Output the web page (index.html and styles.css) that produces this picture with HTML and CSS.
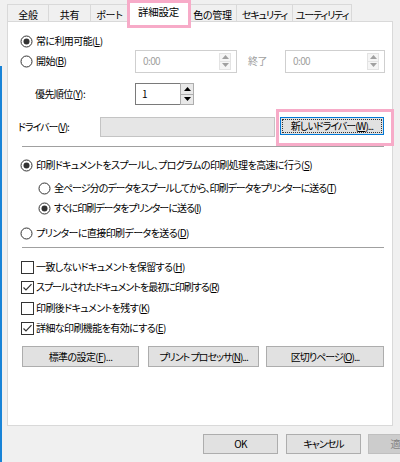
FILE: index.html
```html
<!DOCTYPE html>
<html lang="ja">
<head>
<meta charset="utf-8">
<link rel="stylesheet" href="styles.css">
</head>
<body>
<div class="win">
  <div class="tabs">
    <div class="tab w1">全般</div>
    <div class="tab w2">共有</div>
    <div class="tab w3">ポート</div>
    <div class="tab sel w4">詳細設定<span class="mark mark-tab"></span></div>
    <div class="tab w5">色の管理</div>
    <div class="tab w6 kana">セキュリティ</div>
    <div class="tab w7 kana">ユーティリティ</div>
  </div>
  <div class="panel">
    <div class="row r-a">
      <svg class="rb" width="13" height="13" viewBox="0 0 13 13"><circle cx="6.5" cy="6.5" r="5.5" fill="#fff" stroke="#333"/><circle cx="6.5" cy="6.5" r="3" fill="#333"/></svg>
      <span class="lbl">常に利用可能(<u>L</u>)</span>
    </div>
    <div class="row r-b">
      <div class="col1">
        <svg class="rb" width="13" height="13" viewBox="0 0 13 13"><circle cx="6.5" cy="6.5" r="5.5" fill="#fff" stroke="#333"/></svg>
        <span class="lbl">開始(<u>B</u>)</span>
      </div>
      <div class="spin dis sp-start">
        <span class="val">0:00</span>
        <div class="arrows">
          <span class="ar"><svg width="7" height="4" viewBox="0 0 7 4"><path d="M0 4L3.5 0L7 4Z" fill="#a0a0a0"/></svg></span>
          <span class="ar"><svg width="7" height="4" viewBox="0 0 7 4"><path d="M0 0L3.5 4L7 0Z" fill="#a0a0a0"/></svg></span>
        </div>
      </div>
      <span class="end-lbl">終了</span>
      <div class="spin dis sp-end">
        <span class="val">0:00</span>
        <div class="arrows">
          <span class="ar"><svg width="7" height="4" viewBox="0 0 7 4"><path d="M0 4L3.5 0L7 4Z" fill="#a0a0a0"/></svg></span>
          <span class="ar"><svg width="7" height="4" viewBox="0 0 7 4"><path d="M0 0L3.5 4L7 0Z" fill="#a0a0a0"/></svg></span>
        </div>
      </div>
    </div>
    <div class="row r-c">
      <div class="col1 ind"><span class="lbl">優先順位(<u>Y</u>):</span></div>
      <div class="prio">
        <span class="val">1</span>
      </div>
      <div class="prio-arrows">
        <span class="par"><svg width="7" height="4" viewBox="0 0 7 4"><path d="M0 4L3.5 0L7 4Z" fill="#000"/></svg></span>
        <span class="par"><svg width="7" height="4" viewBox="0 0 7 4"><path d="M0 0L3.5 4L7 0Z" fill="#000"/></svg></span>
      </div>
    </div>
    <div class="row r-d">
      <div class="drv-lbl kana">ドライバー(<u>V</u>):</div>
      <div class="drv-field"></div>
      <div class="btn newdrv"><span class="focus kana">新しいドライバー(<u>W</u>)...</span><span class="mark mark-btn"></span></div>
    </div>
    <div class="sep s1"></div>
    <div class="row r-e">
      <svg class="rb" width="13" height="13" viewBox="0 0 13 13"><circle cx="6.5" cy="6.5" r="5.5" fill="#fff" stroke="#333"/><circle cx="6.5" cy="6.5" r="3" fill="#333"/></svg>
      <span class="lbl">印刷ドキュメントをスプールし、プログラムの印刷処理を高速に行う(<u>S</u>)</span>
    </div>
    <div class="row sub r-f">
      <svg class="rb" width="13" height="13" viewBox="0 0 13 13"><circle cx="6.5" cy="6.5" r="5.5" fill="#fff" stroke="#333"/></svg>
      <span class="lbl kana">全ページ分のデータをスプールしてから、印刷データをプリンターに送る(<u>T</u>)</span>
    </div>
    <div class="row sub r-g">
      <svg class="rb" width="13" height="13" viewBox="0 0 13 13"><circle cx="6.5" cy="6.5" r="5.5" fill="#fff" stroke="#333"/><circle cx="6.5" cy="6.5" r="3" fill="#333"/></svg>
      <span class="lbl kana">すぐに印刷データをプリンターに送る(<u>I</u>)</span>
    </div>
    <div class="row r-h">
      <svg class="rb" width="13" height="13" viewBox="0 0 13 13"><circle cx="6.5" cy="6.5" r="5.5" fill="#fff" stroke="#333"/></svg>
      <span class="lbl">プリンターに直接印刷データを送る(<u>D</u>)</span>
    </div>
    <div class="sep s2"></div>
    <div class="row chk c1">
      <svg class="cb" width="13" height="13" viewBox="0 0 13 13"><rect x="0.5" y="0.5" width="12" height="12" fill="#fff" stroke="#333"/></svg>
      <span class="lbl">一致しないドキュメントを保留する(<u>H</u>)</span>
    </div>
    <div class="row chk c2">
      <svg class="cb" width="13" height="13" viewBox="0 0 13 13"><rect x="0.5" y="0.5" width="12" height="12" fill="#fff" stroke="#333"/><path d="M2.5 6.5L5 9L10.5 3.2" fill="none" stroke="#333" stroke-width="1.2"/></svg>
      <span class="lbl kana">スプールされたドキュメントを最初に印刷する(<u>R</u>)</span>
    </div>
    <div class="row chk c3">
      <svg class="cb" width="13" height="13" viewBox="0 0 13 13"><rect x="0.5" y="0.5" width="12" height="12" fill="#fff" stroke="#333"/></svg>
      <span class="lbl">印刷後ドキュメントを残す(<u>K</u>)</span>
    </div>
    <div class="row chk c4">
      <svg class="cb" width="13" height="13" viewBox="0 0 13 13"><rect x="0.5" y="0.5" width="12" height="12" fill="#fff" stroke="#333"/><path d="M2.5 6.5L5 9L10.5 3.2" fill="none" stroke="#333" stroke-width="1.2"/></svg>
      <span class="lbl">詳細な印刷機能を有効にする(<u>E</u>)</span>
    </div>
    <div class="btnrow">
      <div class="btn b1">標準の設定(<u>F</u>)...</div>
      <div class="btn b2 kana">プリント プロセッサ(<u>N</u>)...</div>
      <div class="btn b3 kana">区切りページ(<u>O</u>)...</div>
    </div>
  </div>
  <div class="footer">
    <div class="btn fb">OK</div>
    <div class="btn fb kana">キャンセル</div>
    <div class="btn fb disabled">適用(<u>A</u>)</div>
  </div>
</div>
</body>
</html>
```

FILE: styles.css
```css
* { box-sizing: border-box; }
html, body { margin: 0; padding: 0; }
body {
  width: 400px;
  height: 462px;
  overflow: hidden;
  background: #f0f0f0;
  font-family: "Noto Sans CJK JP", "Noto Sans", sans-serif;
  font-size: 10px;
  letter-spacing: -0.6px;
  line-height: 1;
  color: #000;
  font-feature-settings: "palt";
}
.kana { letter-spacing: -1px; }
u { text-decoration: underline; text-underline-offset: 1px; }
.win { position: relative; height: 462px; }
.win::before {
  content: "";
  position: absolute;
  left: 0; top: 66px; bottom: 0;
  width: 2px;
  background: #1883d7;
}

/* tabs */
.tabs {
  display: flex;
  align-items: flex-end;
  height: 21px;
  padding-left: 7px;
  letter-spacing: -0.3px;
}
.tab {
  height: 17px;
  border: 1px solid #d9d9d9;
  border-bottom: none;
  margin-right: -1px;
  display: flex;
  align-items: center;
  justify-content: center;
  padding-top: 3px;
  background: #f0f0f0;
  white-space: nowrap;
}
.tab.kana { letter-spacing: -1.1px; }
.tab.sel {
  position: relative;
  z-index: 2;
  height: 22px;
  margin-bottom: -1px;
  padding-top: 1px;
  background: #fff;
  font-size: 10.5px;
}
.w1 { width: 42px; }
.w2 { width: 43px; }
.w3 { width: 39px; }
.w4 { width: 61px; }
.w5 { width: 49px; }
.w6 { width: 57px; }
.w7 { width: 60px; }

.mark { position: absolute; border: 3px solid #f7abc8; pointer-events: none; }
.mark-tab { left: -2px; top: -1px; width: 64px; height: 28px; }
.mark-btn { left: -5px; top: -9px; width: 118px; height: 37px; }

/* panel */
.panel {
  margin: 0 7px;
  height: 405px;
  border: 1px solid #d9d9d9;
  background: #fff;
  padding: 11px 0 0 12px;
}
.row { display: flex; align-items: center; white-space: nowrap; }
.rb, .cb { flex: none; display: block; }
.lbl { margin-left: 3px; }
.r-a { height: 16px; }
.r-b { height: 24px; }
.col1 { width: 115px; display: flex; align-items: center; }
.col1.ind { padding-left: 15px; }
.col1.ind .lbl { margin-left: 0; }

.spin {
  height: 23px;
  border: 1px solid #cfcfcf;
  display: flex;
  align-items: center;
  padding-left: 7px;
}
.spin.dis .val { color: #a0a0a0; }
.sp-start { width: 102px; }
.sp-end { width: 100px; }
.spin .val { flex: 1; }
.arrows {
  display: flex;
  flex-direction: column;
  width: 12px;
  height: 17px;
  margin-right: 5px;
}
.ar {
  flex: 1;
  display: flex;
  align-items: center;
  justify-content: center;
  border: 1px solid #e3e3e3;
  background: #f5f5f5;
}
.ar + .ar { border-top: none; }
.end-lbl { color: #a0a0a0; margin-left: 11px; width: 37px; }

.r-c { margin-top: 10px; height: 22px; }
.prio {
  width: 46px;
  height: 22px;
  border: 1px solid #7a7a7a;
  display: flex;
  align-items: center;
  padding-left: 6px;
}
.prio-arrows {
  display: flex;
  flex-direction: column;
  width: 14px;
  height: 22px;
  margin-left: -1px;
}
.par {
  flex: 1;
  display: flex;
  align-items: center;
  justify-content: center;
  border: 1px solid #adadad;
  background: #e9e9e9;
}
.par + .par { border-top: none; }

.r-d { margin-top: 12px; height: 20px; align-items: flex-start; }
.drv-lbl { width: 82px; margin-left: -2px; height: 20px; display: flex; align-items: center; }
.drv-field {
  width: 175px;
  height: 20px;
  border: 1px solid #c4c4c4;
  background: #e6e6e6;
}

.btn {
  display: flex;
  align-items: center;
  justify-content: center;
  background: #e1e1e1;
  border: 1px solid #adadad;
  white-space: nowrap;
}
.newdrv {
  position: relative;
  margin-left: 5px;
  width: 104px;
  height: 18px;
  border-color: #0078d7;
  padding: 1px;
}
.focus {
  flex: 1;
  align-self: stretch;
  display: flex;
  align-items: center;
  justify-content: center;
  border: 1px dotted #333;
}

.sep { margin-left: 2px; width: 362px; height: 1px; background: #a0a0a0; }
.s1 { margin-top: 9px; }
.r-e { margin-top: 10px; height: 16px; }
.sub { padding-left: 18px; height: 16px; }
.r-f { margin-top: 7px; }
.r-g { margin-top: 4px; }
.r-h { margin-top: 9px; height: 16px; }
.s2 { margin-top: 6px; }

.chk { height: 16px; padding-left: 1px; }
.chk .lbl { margin-left: 2px; }
.c1 { margin-top: 11px; }
.c2 { margin-top: 4px; }
.c3 { margin-top: 5px; }
.c4 { margin-top: 4px; }

.btnrow { display: flex; margin-top: 10px; padding-left: 2px; }
.btnrow .btn { height: 21px; }
.b1 { width: 117px; }
.b2 { width: 111px; margin-left: 9px; }
.b3 { width: 118px; margin-left: 7px; }

.footer {
  display: flex;
  margin-top: 8px;
  padding-left: 203px;
  white-space: nowrap;
}
.fb { flex: none; width: 75px; height: 20px; }
.fb + .fb { margin-left: 8px; }
.fb.disabled { background: #cccccc; border-color: #bfbfbf; color: #838383; margin-left: 7px; }
```
